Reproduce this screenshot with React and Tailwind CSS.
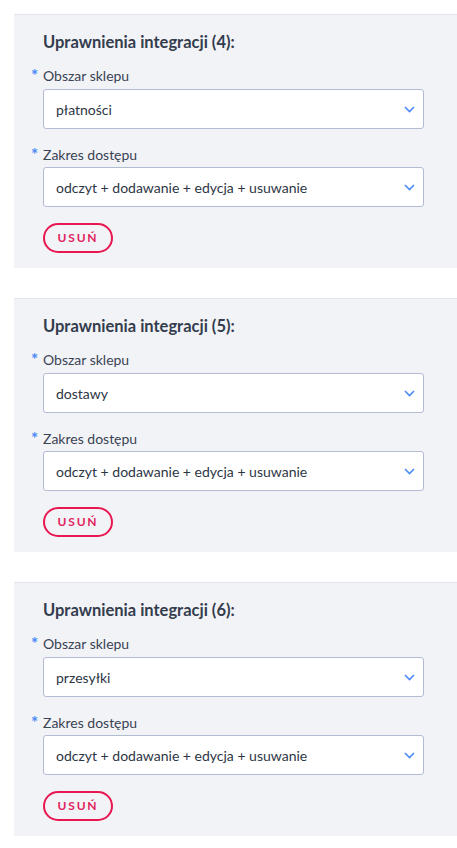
import React from 'react';

const PANELS = [
  { n: 4, area: 'płatności' },
  { n: 5, area: 'dostawy' },
  { n: 6, area: 'przesyłki' },
];

const SCOPE = 'odczyt + dodawanie + edycja + usuwanie';

function Chevron() {
  return (
    <svg width="11" height="7" viewBox="0 0 11 7" fill="none" className="shrink-0">
      <path d="M1 1l4.5 4.5L10 1" stroke="#4a8af4" strokeWidth="1.6" />
    </svg>
  );
}

function Field({ label, value, gap }) {
  return (
    <div>
      <div className="relative h-[20px] leading-[20px] text-[14px] text-[#3a4354]">
        <span className="absolute -left-[12px] top-[1px] text-[#4a8af4] text-[17px] font-bold leading-none">*</span>
        {label}
      </div>
      <div className={`${gap} h-[40px] flex items-center justify-between pl-[12px] pr-[8px] bg-white border border-[#b3bbd3] rounded-[3px] text-[14px] text-[#2d3645]`}>
        <span>{value}</span>
        <Chevron />
      </div>
    </div>
  );
}

export default function App() {
  return (
    <div className="bg-white min-h-screen pt-[14px]" style={{ fontFamily: 'Lato, "Noto Sans", sans-serif' }}>
      {PANELS.map(p => (
        <div key={p.n} className="ml-[14px] mb-[30px] border-t border-[#e3e5ec] bg-[#f2f3f7] pl-[29px] pr-[33px] pt-[15px] pb-[15px]">
          <h2 className="h-[24px] leading-[24px] text-[16.5px] font-bold text-[#333c4c]">Uprawnienia integracji ({p.n}):</h2>
          <div className="mt-[12px]">
            <Field label="Obszar sklepu" value={p.area} gap="mt-[3px]" />
          </div>
          <div className="mt-[16px]">
            <Field label="Zakres dostępu" value={SCOPE} gap="mt-[2px]" />
          </div>
          <button className="mt-[16px] h-[30px] w-[70px] rounded-full border-2 border-[#e8174f] text-[#e0245e] text-[12px] font-bold tracking-[0.15em] flex items-center justify-center">
            USUŃ
          </button>
        </div>
      ))}
    </div>
  );
}
